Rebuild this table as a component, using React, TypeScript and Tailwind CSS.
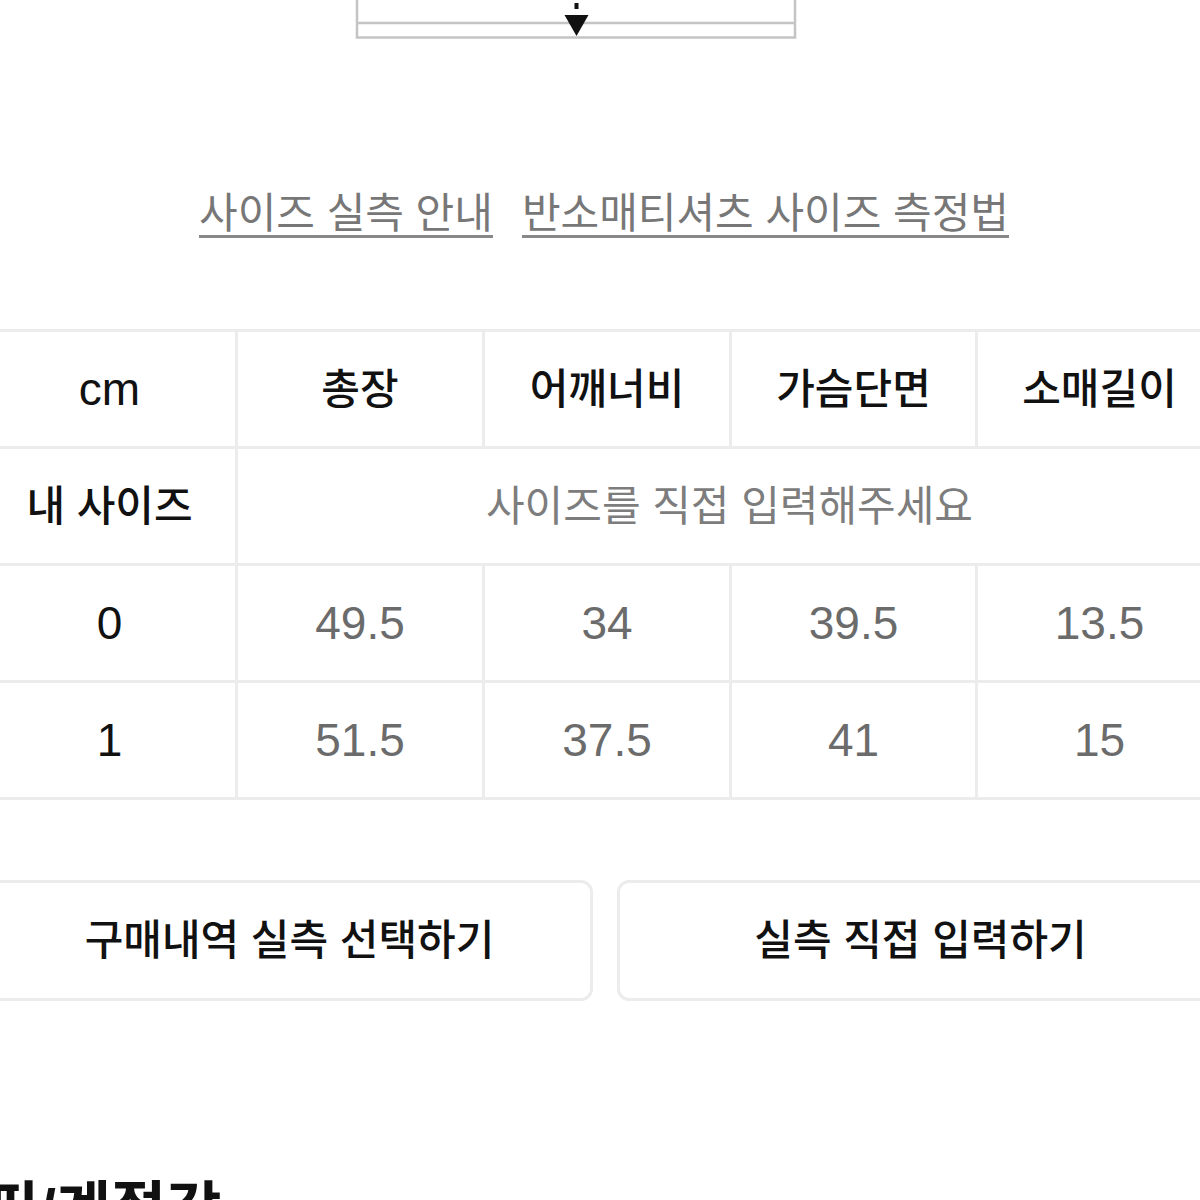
import React from 'react';

const HEADERS = ['총장', '어깨너비', '가슴단면', '소매길이'];
const ROWS = [
  { size: '0', values: ['49.5', '34', '39.5', '13.5'] },
  { size: '1', values: ['51.5', '37.5', '41', '15'] },
];

const ko = "font-['Liberation_Sans','Noto_Sans_CJK_KR',sans-serif]";

const MeasureGuide: React.FC = () => (
  <svg width="444" height="40" viewBox="0 0 444 40" className="ml-[371px] block">
    <path d="M2 0 V37.5 H440 V0" fill="none" stroke="#c4c4c4" strokeWidth="2.5" />
    <path d="M2 23 H440" stroke="#c4c4c4" strokeWidth="2.5" />
    <rect x="219.5" y="3" width="4" height="6" fill="#111" />
    <path d="M209.5 15 H233.5 L221.5 36 Z" fill="#111" />
  </svg>
);

const Cell: React.FC<{ children: React.ReactNode; className?: string }> = ({ children, className = '' }) => (
  <div
    className={`h-[117px] flex items-center justify-center border-r-[3px] border-b-[3px] border-[#ececec] ${className}`}
  >
    {children}
  </div>
);

export default function App() {
  return (
    <div className={`w-[1200px] h-[1200px] overflow-hidden bg-white ${ko}`}>
      <div className="-ml-4 w-[1240px]">
        <MeasureGuide />

        {/* guide links */}
        <div className="mt-[153px] flex justify-center gap-[29px] text-[42px] text-[#777]">
          <span className="inline-block leading-[42px] border-b-[3px] border-[#888]">사이즈 실측 안내</span>
          <span className="inline-block leading-[42px] border-b-[3px] border-[#888]">반소매티셔츠 사이즈 측정법</span>
        </div>

        {/* size table */}
        <div className="mt-[91px] border-t-[3px] border-[#ececec] grid grid-cols-[254px_247px_247px_246px_246px]">
          <Cell className="text-[46px] font-medium text-[#111]">cm</Cell>
          {HEADERS.map((h) => (
            <Cell key={h} className="text-[42px] font-medium text-[#111]">
              {h}
            </Cell>
          ))}

          <Cell className="text-[42px] font-medium text-[#111]">내 사이즈</Cell>
          <Cell className="col-span-4 text-[42px] text-[#7d7d7d]">사이즈를 직접 입력해주세요</Cell>

          {ROWS.map((row) => (
            <React.Fragment key={row.size}>
              <Cell className="text-[46px] text-[#111]">{row.size}</Cell>
              {row.values.map((v, i) => (
                <Cell key={i} className="text-[46px] text-[#6b6b6b]">
                  {v}
                </Cell>
              ))}
            </React.Fragment>
          ))}
        </div>

        {/* actions */}
        <div className="mt-[80px] pl-[2px] flex gap-6">
          <button className="w-[607px] h-[121px] rounded-xl border-[3px] border-[#ececec] bg-white text-[42px] font-medium text-[#111]">
            구매내역 실측 선택하기
          </button>
          <button className="w-[607px] h-[121px] rounded-xl border-[3px] border-[#ececec] bg-white text-[42px] font-medium text-[#111]">
            실측 직접 입력하기
          </button>
        </div>

        <h2 className="mt-[180px] ml-0 text-[60px] leading-[60px] font-bold text-[#111]">
          핏/계절감
        </h2>
      </div>
    </div>
  );
}
